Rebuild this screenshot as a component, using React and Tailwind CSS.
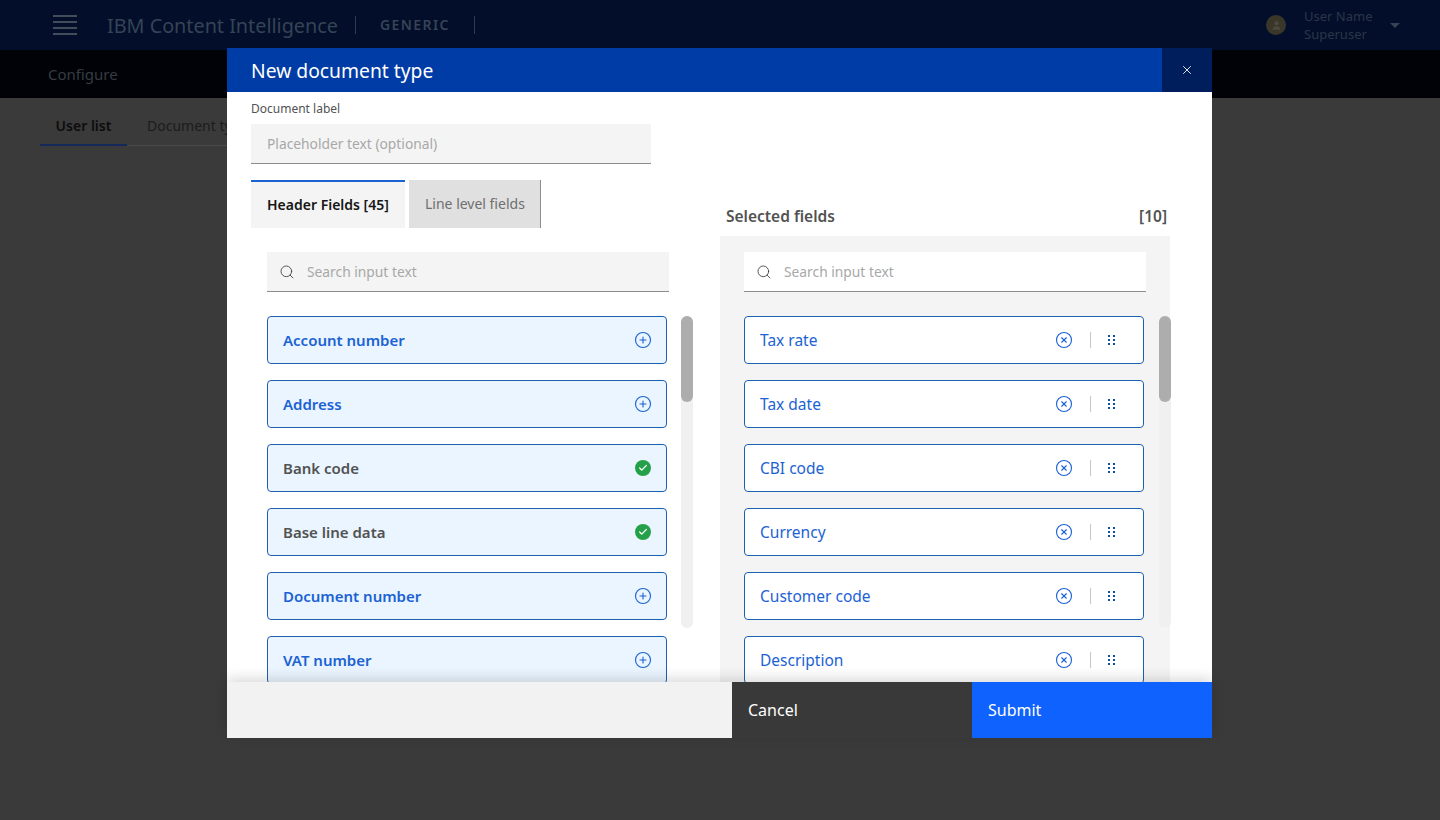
import React from 'react';
import { Search, CirclePlus, CircleX, Check, X, User } from 'lucide-react';

const font = "font-['Noto_Sans','Open_Sans',sans-serif]";

const headerFields = [
  { name: 'Account number' },
  { name: 'Address' },
  { name: 'Bank code', added: true },
  { name: 'Base line data', added: true },
  { name: 'Document number' },
  { name: 'VAT number' },
];

const selectedFields = ['Tax rate', 'Tax date', 'CBI code', 'Currency', 'Customer code', 'Description'];

const DragDots = () => (
  <svg width="8" height="10" viewBox="0 0 8 10" className="text-[#0f4fa8]" fill="currentColor">
    <rect x="0" y="0" width="2" height="2" />
    <rect x="5" y="0" width="2" height="2" />
    <rect x="0" y="4" width="2" height="2" />
    <rect x="5" y="4" width="2" height="2" />
    <rect x="0" y="8" width="2" height="2" />
    <rect x="5" y="8" width="2" height="2" />
  </svg>
);

const Scrollbar = () => (
  <div className="w-3 h-[312px] shrink-0 rounded-full bg-[#f0f0f0]">
    <div className="h-[86px] rounded-full bg-[#adadad]" />
  </div>
);

const SearchBox = ({ className }) => (
  <div className={`flex items-center h-10 w-[402px] pl-3 border-b border-[#8d8d8d] ${className}`}>
    <Search size={16} strokeWidth={1.25} className="text-[#393939]" />
    <span className="ml-3 pt-px text-[13.8px] text-[#a8a8a8]">Search input text</span>
  </div>
);

const HeaderFieldCard = ({ field }) => (
  <div className="flex items-center justify-between shrink-0 h-12 w-[400px] pl-[15px] pr-[14px] rounded border border-[#2060b0] bg-[#eaf5ff]">
    <span className={`text-[15px] font-semibold ${field.added ? 'text-[#525252]' : 'text-[#1b62d4]'}`}>{field.name}</span>
    {field.added ? (
      <span className="flex items-center justify-center size-[18px]">
        <span className="flex items-center justify-center size-4 rounded-full bg-[#24a148]">
          <Check size={10} strokeWidth={3} className="text-white" />
        </span>
      </span>
    ) : (
      <CirclePlus size={18} strokeWidth={1.5} className="text-[#1b62d4]" />
    )}
  </div>
);

const SelectedFieldCard = ({ name }) => (
  <div className="flex items-center shrink-0 h-12 w-[400px] pl-[15px] rounded border border-[#2060b0] bg-white">
    <span className="flex-1 pt-px text-[15.5px] text-[#1b62d4]">{name}</span>
    <CircleX size={18} strokeWidth={1.5} className="text-[#1b62d4]" />
    <span className="w-px h-4 ml-[17px] mr-[17px] bg-[#c6c6c6]" />
    <span className="mr-[27px] flex"><DragDots /></span>
  </div>
);

export default function App() {
  return (
    <div className={`relative h-[820px] w-[1440px] overflow-hidden bg-[#3a3a3a] ${font}`}>
      {/* page behind the modal */}
      <header className="flex items-center h-[50px] pl-[53px] pr-10 bg-[#020e2a]">
        <div className="flex flex-col gap-1 w-6">
          <span className="h-0.5 bg-[#424c5b]" />
          <span className="h-0.5 bg-[#424c5b]" />
          <span className="h-0.5 bg-[#424c5b]" />
          <span className="h-0.5 bg-[#424c5b]" />
        </div>
        <span className="ml-[30px] w-[231px] pt-0.5 text-[19.8px] whitespace-nowrap text-[#364356]">IBM Content Intelligence</span>
        <span className="ml-[17px] w-px h-[18px] bg-[#2e3a4e]" />
        <span className="ml-6 text-sm font-semibold tracking-[1.4px] text-[#364356]">GENERIC</span>
        <span className="ml-6 w-px h-[18px] bg-[#2e3a4e]" />
        <div className="ml-auto flex items-center">
          <span className="flex items-center justify-center size-5 rounded-full bg-[#39362a]">
            <User size={11} className="text-[#4d4a3c]" fill="currentColor" />
          </span>
          <div className="ml-[18px] w-[69px] text-[13px] leading-[18px] text-[#2a3648]">
            <div>User Name</div>
            <div>Superuser</div>
          </div>
          <span className="ml-[17px] border-x-[5px] border-t-[5px] border-x-transparent border-t-[#364356]" />
        </div>
      </header>
      <div className="flex items-center h-12 pl-12 bg-[#000207] text-[15px] text-[#373c42]">Configure</div>
      <nav className="flex mt-[18px] ml-10 w-[300px] h-[29px] border-b border-[#4a4a4a] text-sm box-content">
        <span className="w-[87px] -mb-px text-center font-semibold text-[#0d0d0d] border-b-2 border-[#14285a]">User list</span>
        <span className="ml-5 whitespace-nowrap text-[#1c1c1c]">Document type</span>
      </nav>

      {/* modal */}
      <div className="absolute left-[227px] top-12 flex flex-col w-[985px] h-[690px] bg-white">
        <div className="flex items-center h-11 shrink-0 pl-6 bg-[#003ca5]">
          <h2 className="flex-1 pt-0.5 text-[19.3px] text-white">New document type</h2>
          <button className="flex items-center justify-center w-[50px] h-full bg-[#001d5c]">
            <X size={14} strokeWidth={1.5} className="text-white" />
          </button>
        </div>

        <div className="flex-1 min-h-0 overflow-hidden pl-6">
          <label className="block mt-[9px] text-xs leading-4 text-[#525252]">Document label</label>
          <div className="flex items-center mt-[7px] h-10 w-[400px] pl-4 pt-px bg-[#f4f4f4] border-b border-[#8d8d8d] text-[13.8px] text-[#a8a8a8]">
            Placeholder text (optional)
          </div>

          <div className="flex mt-4">
            <div className="w-[469px] shrink-0">
              <div className="flex gap-1 h-12 text-sm">
                <div className="flex items-center w-[154px] pl-4 bg-[#f4f4f4] border-t-2 border-[#1b62d4] font-semibold text-[#161616]">
                  Header Fields [45]
                </div>
                <div className="flex items-center w-[132px] pl-4 bg-[#e0e0e0] border-r border-[#8d8d8d] text-[#6f6f6f]">
                  Line level fields
                </div>
              </div>
              <div className="pl-4 pt-6">
                <SearchBox className="bg-[#f4f4f4]" />
                <div className="flex gap-3.5 mt-6">
                  <div className="flex flex-col gap-4">
                    {headerFields.map((field) => (
                      <HeaderFieldCard key={field.name} field={field} />
                    ))}
                  </div>
                  <Scrollbar />
                </div>
              </div>
            </div>

            <div className="w-[451px] shrink-0">
              <div className="flex items-end justify-between h-14 pb-2.5 pl-1.5 pr-1 text-[15.5px] font-semibold leading-5 text-[#525252]">
                <span>Selected fields</span>
                <span>[10]</span>
              </div>
              <div className="px-6 pt-4 pb-6 w-[450px] bg-[#f4f4f4]">
                <SearchBox className="bg-white" />
                <div className="flex gap-[15px] mt-6 w-[427px]">
                  <div className="flex flex-col gap-4">
                    {selectedFields.map((name) => (
                      <SelectedFieldCard key={name} name={name} />
                    ))}
                  </div>
                  <Scrollbar />
                </div>
              </div>
            </div>
          </div>
        </div>

        <footer className="flex h-14 shrink-0 text-base text-white shadow-[0_-4px_12px_rgba(0,0,0,0.14)] z-10">
          <div className="w-[505px] bg-[#f2f2f2]" />
          <button className="w-60 pl-4 text-left bg-[#393939]">Cancel</button>
          <button className="w-60 pl-4 text-left bg-[#0f62fe]">Submit</button>
        </footer>
      </div>
    </div>
  );
}
